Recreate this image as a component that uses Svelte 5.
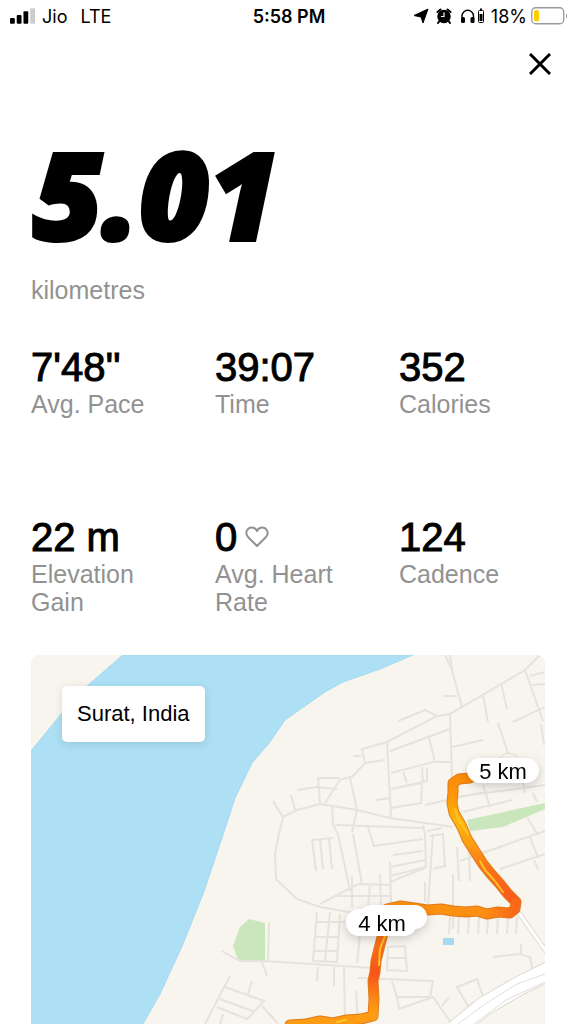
<script lang="ts">
	const stats = [
		{ value: "7'48''", label: 'Avg. Pace' },
		{ value: '39:07', label: 'Time' },
		{ value: '352', label: 'Calories' },
		{ value: '22 m', label: 'Elevation Gain' },
		{ value: '0', label: 'Avg. Heart Rate', heart: true },
		{ value: '124', label: 'Cadence' }
	];

	const water =
		'M0 96L31 58L56 31L92 0H382L349 14L312 27L294 37L254 65L239 87L221 108L204 143L192 180L172 239L152 289L129 339L112 369V800H0Z';

	const roads = [
		// north east
		'M414 0L421 15L431 52M419 0L421 15M412 41H426M509 0L494 15L419 59L406 61L356 87L331 94L334 108',
		'M367 66L394 55L406 61M419 59L421 123M359 96L419 74M356 87L360 162M322 101H330',
		'M354 105L334 108L322 121L309 125L294 148M398 83L404 107M360 118L402 107H419M421 92L452 85',
		'M452 40L457 67M470 28L476 54M494 15L512 66M499 21L514 17M501 30L514 29M482 67L514 52M467 68L477 98M510 69L513 90',
		'M360 134L391 128L390 148L360 153M345 145L360 143M372 117L376 128M391 112L392 127M396 113V126L360 134',
		'M394 150L439 140L514 130M432 157L481 145M419 143L456 137M452 130L459 152M492 127L494 138M502 138L506 147M496 162L507 180',
		// middle
		'M266 135L286 132L306 134M287 123H309M287 123L289 148M260 140L264 155M319 123L326 155L321 177',
		'M242 146L252 162L266 155L289 149L302 151L326 155L359 163L422 172',
		'M252 162L247 183L244 199L245 224L266 244L289 252L329 259M301 150L302 170L307 179L319 236M304 170L392 173',
		'M322 179L331 229M337 172L343 191L392 184M362 200L392 196M392 170L394 179L395 212L359 221M359 212L394 205M359 207L360 249M359 227L394 213',
		'M399 181L412 179L414 211L402 214M402 179L397 249M394 227V247M396 176L411 173',
		'M281 185L302 183M281 185L285 216M289 184L292 214M298 184L301 214',
		'M289 249L327 229L359 230M306 241H359M321 221V252M339 229L337 252M349 219L350 252',
		'M429 206L514 176M469 214L514 199M499 182L507 203M503 205L507 215M422 219V274M426 192L428 226M438 196L439 226',
		// south
		'M286 257L282 306L306 307L309 259M286 267H314M285 282H308M284 296H306M299 257L294 306M331 262L326 308',
		'M191 296L209 306H234L342 313M238 267L237 306M231 307L236 321M287 312L286 326M303 312V331M313 312L314 369M325 336L327 369',
		'M327 323L402 326L399 342H366L361 326M366 342L368 354L402 342L421 369M411 351L418 342',
		'M357 292L374 291L376 316L356 315ZM357 303H375M462 302L489 299L499 302L502 317M490 289V299M426 332L446 324L452 342L437 351Z',
		'M199 321L174 369M194 332L233 346L216 364L186 352M189 344L224 357M221 326L217 339M231 351L247 369M192 359L189 369M239 359L247 369'
	];

	// side streets hanging below the last kilometre
	const lanes = [419, 428, 438, 448, 457, 467, 477, 486];

	const route =
		'M439 123L428 124L422 128L422 137L421 148L423 158L431 172L436 184L443 195L452 209L460 219L469 229L477 239L485 247L484 254L479 258L467 257L456 259L446 256L435 257L422 256L410 254L396 255L383 253L369 251L356 254L355 266L351 282L348 294L345 306L344 317L342 326L343 344L342 361L330 364L316 365L302 368L289 366L275 369L259 370';

	const legs = [
		{ d: 'M439 123L428 124L422 128L422 137L421 148L423 158L431 172L436 184L443 195L452 209L460 219L469 229L477 239L485 247', paint: 'url(#leg-5)' },
		{ d: 'M485 247L484 254L479 258L467 257L456 259L446 256L435 257L422 256L410 254L396 255L383 253L369 251L356 254', paint: 'url(#leg-4)' },
		{ d: 'M356 254L355 266L351 282L348 294L345 306L344 317L342 326L343 344L342 361', paint: 'url(#leg-3)' },
		{ d: 'M342 361L330 364L316 365L302 368L289 366L275 369L259 370', paint: '#fd9b12' }
	];
</script>

<main class="run">
	<header class="status-bar">
		<div class="status-left">
			<svg class="signal" viewBox="0 0 26 16" aria-hidden="true">
				<rect x="0" y="10" width="5" height="6" rx="1" />
				<rect x="7" y="7" width="5" height="9" rx="1" />
				<rect x="14" y="3" width="5" height="13" rx="1" />
				<rect x="21" y="0" width="5" height="16" rx="1" fill="#ccc" />
			</svg>
			<span>Jio</span>
			<span class="network">LTE</span>
		</div>
		<time class="clock">5:58 PM</time>
		<div class="status-right">
			<svg class="icon-location" viewBox="0 0 14 14" aria-hidden="true">
				<path d="M14 0L9 14L7 8L0 6.500Z" stroke="#000" stroke-linejoin="round" />
			</svg>
			<svg class="icon-alarm" viewBox="0 0 16 16" aria-hidden="true">
				<circle cx="8" cy="8.500" r="6.700" />
				<path d="M1.500 4L4.500 1.500M14.500 4L11.500 1.500M3.500 13L2 15M12.500 13L14 15" fill="none" stroke="#000" stroke-width="2" stroke-linecap="round" />
				<path d="M8 4.500V8.500H5" fill="none" stroke="#fff" stroke-width="1.200" />
			</svg>
			<svg class="icon-headphones" viewBox="0 0 25 16" aria-hidden="true">
				<path d="M2 12V8a5.500 5.500 0 0 1 11.500 0v4" fill="none" stroke="#000" stroke-width="1.400" />
				<rect x="1" y="9" width="4" height="6" rx="1.500" />
				<rect x="10.500" y="9" width="4" height="6" rx="1.500" />
				<rect x="18.500" y="2.500" width="5" height="12" rx="1" fill="none" stroke="#000" />
				<rect x="19.500" y="6" width="3" height="7" />
				<rect x="20" y="0.500" width="2" height="2" />
			</svg>
			<span>18%</span>
			<svg class="icon-battery" viewBox="0 0 37 18" aria-hidden="true">
				<rect x="0.750" y="0.750" width="32" height="16" rx="4" fill="none" stroke="#999" stroke-width="1.300" />
				<rect x="3" y="3" width="5" height="11.500" rx="2" fill="#fc0" />
				<path d="M35 6q2 3 0 6z" fill="#999" />
			</svg>
		</div>
	</header>

	<div class="toolbar">
		<button class="close" type="button" aria-label="Close">
			<svg viewBox="0 0 22 22" aria-hidden="true">
				<path d="M1 1L21 21M21 1L1 21" fill="none" stroke="#000" stroke-width="3" />
			</svg>
		</button>
	</div>

	<section class="distance">
		<h1>5.01</h1>
		<p class="label">kilometres</p>
	</section>

	<dl class="stats">
		{#each stats as stat}
			<div class="stat">
				<dd>
					{stat.value}
					{#if stat.heart}
						<svg class="heart" viewBox="0 0 24 22" aria-hidden="true">
							<path d="M12 20L3 11C-1 6 3 1.500 7 1.500C9.500 1.500 11 3 12 5C13 3 14.500 1.500 17 1.500C21 1.500 25 6 21 11Z" fill="none" stroke="#929292" stroke-width="2" stroke-linejoin="round" />
						</svg>
					{/if}
				</dd>
				<dt class="label">{stat.label}</dt>
			</div>
		{/each}
	</dl>

	<section class="map" aria-label="Route map">
		<svg class="canvas" viewBox="0 0 514 369" preserveAspectRatio="xMinYMin slice">
			<defs>
				<linearGradient id="leg-5" gradientUnits="userSpaceOnUse" x1="0" y1="123" x2="0" y2="247">
					<stop offset="0" stop-color="#fb8c0a" />
					<stop offset="0.150" stop-color="#fd9708" />
					<stop offset="0.350" stop-color="#fdb60b" />
					<stop offset="0.550" stop-color="#fb9b12" />
					<stop offset="0.720" stop-color="#fb7416" />
					<stop offset="1" stop-color="#f9571b" />
				</linearGradient>
				<linearGradient id="leg-4" gradientUnits="userSpaceOnUse" x1="356" y1="0" x2="485" y2="0">
					<stop offset="0" stop-color="#fb920e" />
					<stop offset="0.750" stop-color="#fc8f14" />
					<stop offset="1" stop-color="#fa681a" />
				</linearGradient>
				<linearGradient id="leg-3" gradientUnits="userSpaceOnUse" x1="0" y1="254" x2="0" y2="361">
					<stop offset="0" stop-color="#fb920e" />
					<stop offset="0.350" stop-color="#fa6a18" />
					<stop offset="0.600" stop-color="#f9531b" />
					<stop offset="0.800" stop-color="#fb8016" />
					<stop offset="1" stop-color="#fda414" />
				</linearGradient>
			</defs>

			<path d={water} fill="#ade0f5" stroke="#a5d9ee" />
			<path d="M436 165L514 148V154L472 172L439 176Z" fill="#c9e6bd" />
			<path d="M218 264L234 268V306L207 305L202 291L209 272Z" fill="#c9e6bd" />
			<rect x="412" y="283" width="11" height="7" fill="#a5daf2" />

			<g class="roads">
				{#each roads as d}
					<path {d} />
				{/each}
				{#each lanes as x}
					<path d="M{x} 262L{x - 1} 279" />
				{/each}
			</g>

			<g class="highway">
				<path class="casing" d="M424 375L452 352L486 332L520 315" />
				<path class="surface" d="M424 375L452 352L486 332L520 315" />
				<path class="divider" d="M427 369L454 349L486 329L514 319M443 369L475 345L514 327" />
				<path class="street-casing" d="M488 258L517 299" />
				<path class="street" d="M488 258L517 299" />
			</g>

			<g class="route">
				<path class="outline" d={route} />
				{#each legs as leg}
					<path d={leg.d} stroke={leg.paint} stroke-width="9" />
				{/each}
				<path class="streak" d="M424 154L428 165L437 179M449 206L454 215L463 225L472 237M354 281L349 294L348 310M306 367L315 365" />
			</g>

			<circle cx="478" cy="109" r="11" fill="#f8f4ee" stroke="#e3e0da" />
			<g class="pin">
				<rect x="328" y="250" width="68" height="24" rx="12" />
				<rect x="315" y="254" width="71" height="27" rx="13" />
				<text x="351" y="276">4 km</text>
			</g>
			<g class="pin">
				<rect x="436" y="103" width="72" height="25" rx="13" />
				<text x="472" y="124">5 km</text>
			</g>
		</svg>
		<div class="place">Surat, India</div>
	</section>
</main>

<style>
	:global(body) {
		background: #fff;
	}

	.run {
		display: flex;
		flex-direction: column;
		min-height: 100vh;
		box-sizing: border-box;
		color: #000;
		font-family: 'Liberation Sans', Arial, sans-serif;
	}

	.status-bar {
		display: grid;
		grid-template-columns: 1fr auto 1fr;
		align-items: center;
		height: 32px;
		padding: 0 8px 0 10px;
		font-family: Inter, sans-serif;
		font-size: 18px;
	}

	.status-left,
	.status-right {
		display: flex;
		align-items: center;
	}

	.status-left {
		gap: 7px;
	}

	.network {
		margin-left: 6px;
	}

	.status-right {
		justify-content: flex-end;
	}

	.clock {
		font-weight: 600;
	}

	.signal {
		width: 25px;
		height: 16px;
	}

	.icon-location {
		width: 14px;
		height: 14px;
		margin-right: 8px;
		overflow: visible;
	}

	.icon-alarm {
		width: 16px;
		height: 16px;
		margin-right: 8px;
	}

	.icon-headphones {
		width: 25px;
		height: 16px;
		margin-right: 6px;
	}

	.icon-battery {
		width: 37px;
		height: 18px;
		margin-left: 4px;
	}

	.toolbar {
		display: flex;
		justify-content: flex-end;
		padding: 12px 16px;
	}

	.close {
		display: flex;
		padding: 9px;
		border: none;
		background: none;
		cursor: pointer;
	}

	.close svg {
		width: 22px;
		height: 22px;
	}

	.distance {
		padding: 34px 31px 0;
	}

	h1 {
		margin: 0;
		padding-left: 2px;
		font-family: 'Open Sans', sans-serif;
		font-size: 120px;
		font-style: italic;
		font-weight: 800;
		line-height: 128px;
		-webkit-text-stroke: 4px #000;
	}

	.label {
		margin: 0;
		color: #929292;
		font-size: 25px;
		line-height: 28px;
	}

	.distance .label {
		margin-top: 18px;
	}

	.stats {
		display: grid;
		grid-template-columns: repeat(3, 1fr);
		gap: 54px 38px;
		margin: 0;
		padding: 40px 31px 25px;
	}

	.stat {
		display: flex;
		flex-direction: column;
		min-height: 116px;
	}

	dd {
		display: flex;
		align-items: center;
		gap: 8px;
		margin: 0;
		font-size: 40px;
		line-height: 46px;
		-webkit-text-stroke: 1px #000;
	}

	.heart {
		width: 24px;
		height: 22px;
	}

	.map {
		position: relative;
		flex: 1;
		min-height: 369px;
		margin: 0 31px;
		overflow: hidden;
		border-radius: 8px 8px 0 0;
		background: #f8f4ee;
	}

	.canvas {
		position: absolute;
		width: 100%;
		height: 100%;
	}

	.place {
		position: absolute;
		top: 31px;
		left: 31px;
		padding: 15px;
		border-radius: 5px;
		background: #fff;
		box-shadow: 0 2px 10px rgba(0, 0, 0, 0.12);
		font-size: 22px;
		line-height: 26px;
	}

	.roads {
		fill: none;
		stroke: #e6e2dc;
		stroke-width: 2;
	}

	.highway {
		fill: none;
	}

	.casing {
		stroke: #dedbd6;
		stroke-width: 20;
	}

	.surface {
		stroke: #fff;
		stroke-width: 18;
	}

	.divider {
		stroke: #e0ddd8;
		stroke-width: 1;
	}

	.street-casing {
		stroke: #e0ddd8;
		stroke-width: 5;
	}

	.street {
		stroke: #fff;
		stroke-width: 3;
	}

	.route {
		fill: none;
		stroke-linecap: round;
		stroke-linejoin: round;
	}

	.outline {
		stroke: #e07a1c;
		stroke-width: 11;
	}

	.streak {
		stroke: #fdc52a;
		stroke-width: 2;
	}

	.pin {
		filter: drop-shadow(0 3px 5px rgba(0, 0, 0, 0.18));
	}

	.pin rect {
		fill: #fff;
	}

	.pin text {
		fill: #000;
		font-size: 22px;
		text-anchor: middle;
	}
</style>
